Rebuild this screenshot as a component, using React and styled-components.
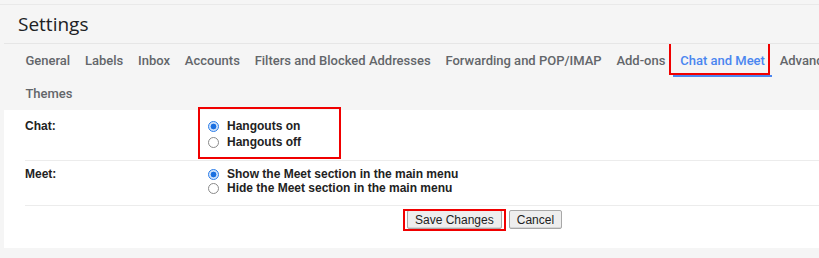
import React from 'react';
import styled, { createGlobalStyle } from 'styled-components';

const GlobalStyle = createGlobalStyle`
  html, body {
    margin: 0;
    padding: 0;
    background: #f5f5f5;
    overflow: hidden;
  }
`;

const Page = styled.div`
  width: 819px;
  height: 258px;
  padding-top: 4px;
  box-sizing: border-box;
  background: #f5f5f5;
  overflow: hidden;
`;

const TopRule = styled.div`
  border-top: 1px solid #e9e9e9;
`;

const Header = styled.div`
  height: 38px;
  padding-left: 18px;
  display: flex;
  align-items: center;
`;

const Title = styled.h1`
  margin: 0;
  font-family: "Open Sans", Roboto, sans-serif;
  font-weight: 400;
  font-size: 19px;
  color: #202124;
`;

const Nav = styled.nav`
  margin-left: 4px;
  border-top: 1px solid #e6e6e6;
  padding: 0 0 0 14px;
  height: 66px;
  width: 920px;
  display: flex;
  flex-wrap: wrap;
  align-content: flex-start;
  overflow: hidden;
`;

const Tab = styled.a`
  position: relative;
  height: 32px;
  display: flex;
  align-items: center;
  padding: 0 7.4px;
  font-family: Roboto, "Open Sans", sans-serif;
  font-weight: 500;
  font-size: 13px;
  color: ${p => (p.$active ? '#4a86f0' : '#63666a')};
  white-space: nowrap;
  border-bottom: 2px solid ${p => (p.$active ? '#4a86f0' : 'transparent')};
  box-sizing: border-box;
  margin-top: 1px;
`;

const Highlight = styled.span`
  position: absolute;
  box-sizing: border-box;
  pointer-events: none;
  border: 2px solid #f00000;
  top: ${p => p.$t}px;
  left: ${p => p.$l}px;
  bottom: ${p => p.$b}px;
  ${p => (p.$w ? `width: ${p.$w}px;` : `right: ${p.$r}px;`)}
`;

const Panel = styled.section`
  margin-left: 4px;
  background: #fff;
  height: 138px;
  padding-left: 21px;
`;

const Row = styled.div`
  display: grid;
  grid-template-columns: 183px 1fr;
  padding: ${p => p.$pad};
  border-bottom: 1px solid #ececec;
`;

const Label = styled.div`
  font-family: "Liberation Sans", Arial, sans-serif;
  font-weight: 700;
  font-size: 12px;
  color: #222;
  line-height: ${p => p.$lh}px;
`;

const Options = styled.div`
  position: relative;
  display: flex;
  flex-direction: column;
  align-self: start;
  justify-self: start;
`;

const Option = styled.label`
  display: flex;
  align-items: center;
  gap: 8px;
  height: ${p => p.$lh}px;
  font-family: "Liberation Sans", Arial, sans-serif;
  font-weight: 700;
  font-size: 12px;
  color: #222;
  white-space: nowrap;
`;

const Radio = styled.span`
  width: 11px;
  height: 11px;
  border-radius: 50%;
  box-sizing: border-box;
  flex: none;
  border: 1px solid ${p => (p.$on ? '#2b7de9' : '#8a8a8a')};
  background: ${p =>
    p.$on ? 'radial-gradient(circle, #1a6fe0 0 2.6px, #cfe2fb 3.2px)' : '#fff'};
`;

const Actions = styled.div`
  display: flex;
  gap: 7px;
  padding: 4px 0 0 382px;
`;

const ButtonWrap = styled.span`
  position: relative;
  display: inline-flex;
`;

const Button = styled.button`
  height: 19px;
  padding: 0 7px;
  font-family: "Liberation Sans", Arial, sans-serif;
  font-size: 12px;
  color: #222;
  background: #eeeeee;
  border: 1px solid #a8a8a8;
  border-radius: 2px;
  box-shadow: inset 0 -1px 0 #d6d6d6;
`;

const tabs = [
  'General',
  'Labels',
  'Inbox',
  'Accounts',
  'Filters and Blocked Addresses',
  'Forwarding and POP/IMAP',
  'Add-ons',
  'Chat and Meet',
  'Advanced',
  'Offline',
  'Themes',
];

export default function App() {
  return (
    <Page>
      <GlobalStyle />
      <TopRule />
      <Header>
        <Title>Settings</Title>
      </Header>
      <Nav>
        {tabs.map(t => (
          <Tab key={t} $active={t === 'Chat and Meet'}>
            {t}
            {t === 'Chat and Meet' && <Highlight $t={-4} $l={-4} $r={2} $b={0} />}
          </Tab>
        ))}
      </Nav>
      <Panel>
        <Row $pad="8px 0 10px">
          <Label $lh={16}>Chat:</Label>
          <Options>
            <Option $lh={16}>
              <Radio $on />
              Hangouts on
            </Option>
            <Option $lh={16}>
              <Radio />
              Hangouts off
            </Option>
            <Highlight $t={-11} $l={-10} $w={143} $b={-9} />
          </Options>
        </Row>
        <Row $pad="6px 0 10px">
          <Label $lh={14}>Meet:</Label>
          <Options>
            <Option $lh={14}>
              <Radio $on />
              Show the Meet section in the main menu
            </Option>
            <Option $lh={14}>
              <Radio />
              Hide the Meet section in the main menu
            </Option>
          </Options>
        </Row>
        <Actions>
          <ButtonWrap>
            <Button>Save Changes</Button>
            <Highlight $t={-1} $l={-4} $r={-4} $b={-2} />
          </ButtonWrap>
          <Button>Cancel</Button>
        </Actions>
      </Panel>
    </Page>
  );
}
